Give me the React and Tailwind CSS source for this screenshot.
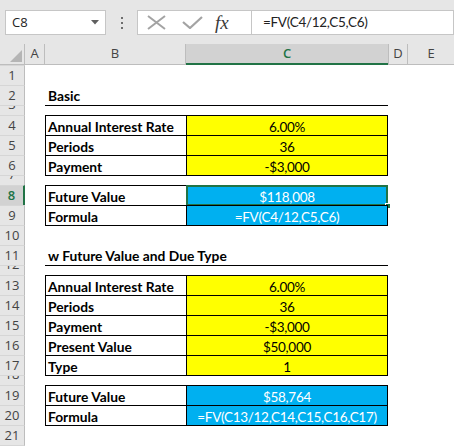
import React from "react";

const CELL_FONT = { fontFamily: "Lato, 'Liberation Sans', sans-serif" };
const UI_FONT = { fontFamily: "'Open Sans', 'Noto Sans', sans-serif" };

// Sheet rows: height, label in column B, value in column C and fill style.
// `line` draws the closing rule of the block above across columns B:C.
const ROWS = [
  { n: 1, h: 20 },
  { n: 2, h: 20, title: "Basic" },
  { n: 3, h: 10, short: true, line: true },
  { n: 4, h: 20, box: true, label: "Annual Interest Rate", value: "6.00%", fill: "yellow" },
  { n: 5, h: 20, box: true, label: "Periods", value: "36", fill: "yellow" },
  { n: 6, h: 20, box: true, label: "Payment", value: "-$3,000", fill: "yellow" },
  { n: 7, h: 10, short: true, line: true },
  { n: 8, h: 20, box: true, label: "Future Value", value: "$118,008", fill: "blue", selected: true },
  { n: 9, h: 20, box: true, label: "Formula", value: "=FV(C4/12,C5,C6)", fill: "blue" },
  { n: 10, h: 20, line: true },
  { n: 11, h: 20, title: "w Future Value and Due Type" },
  { n: 12, h: 10, short: true, line: true },
  { n: 13, h: 20, box: true, label: "Annual Interest Rate", value: "6.00%", fill: "yellow" },
  { n: 14, h: 20, box: true, label: "Periods", value: "36", fill: "yellow" },
  { n: 15, h: 20, box: true, label: "Payment", value: "-$3,000", fill: "yellow" },
  { n: 16, h: 20, box: true, label: "Present Value", value: "$50,000", fill: "yellow" },
  { n: 17, h: 20, box: true, label: "Type", value: "1", fill: "yellow" },
  { n: 18, h: 10, short: true, line: true },
  { n: 19, h: 20, box: true, label: "Future Value", value: "$58,764", fill: "blue" },
  { n: 20, h: 20, box: true, label: "Formula", value: "=FV(C13/12,C14,C15,C16,C17)", fill: "blue" },
  { n: 21, h: 20, line: true },
  { n: 22, h: 20 },
];

function RowHeader({ row }) {
  const sel = row.selected;
  return (
    <div
      className={`w-[25px] shrink-0 overflow-hidden border-t border-[#d6d6d6] border-r ${
        sel ? "bg-[#d2d2d2] border-r-[#217346] border-r-2" : "bg-[#e6e6e6] border-r-[#bdbdbd]"
      }`}
      style={{ height: row.h, ...UI_FONT }}
    >
      {row.short ? (
        <div className="text-[13px] leading-[20px] text-center text-[#444] -mt-[12px]">{row.n}</div>
      ) : (
        <div
          className={`text-[13px] leading-[19px] text-center ${
            sel ? "text-[#217346] font-semibold" : "text-[#444]"
          }`}
        >
          {row.n}
        </div>
      )}
    </div>
  );
}

function SheetRow({ row }) {
  const fillCls =
    row.fill === "yellow"
      ? "bg-[#ffff00] text-black"
      : row.fill === "blue"
      ? "bg-[#00b0f0] text-white"
      : "";
  return (
    <div className="flex" style={{ height: row.h }}>
      <RowHeader row={row} />
      <div className="w-[20px] shrink-0" />
      {row.box ? (
        <>
          <div
            className="w-[141px] shrink-0 border-l border-t border-black pl-[2px] pt-[2px] text-[13.8px] leading-[18px] font-bold text-black whitespace-nowrap"
            style={CELL_FONT}
          >
            {row.label}
          </div>
          <div className={`relative w-[202px] shrink-0 border-l border-r border-t border-black ${fillCls}`}>
            <div
              className="pt-[2px] text-[13.5px] tracking-[-0.3px] leading-[18px] text-center whitespace-nowrap"
              style={CELL_FONT}
            >
              {row.value}
            </div>
            {row.selected && (
              <>
                <div className="absolute left-[-1px] top-[-1px] right-[-1px] bottom-[-1px] border-2 border-[#217346]" />
                <div className="absolute right-[-4px] bottom-[-4px] w-[6px] h-[6px] bg-[#217346] border border-white" />
              </>
            )}
          </div>
        </>
      ) : row.title ? (
        <div
          className="w-[343px] shrink-0 pl-[3px] pt-[2px] text-[13.8px] leading-[18px] font-bold text-black whitespace-nowrap"
          style={CELL_FONT}
        >
          {row.title}
        </div>
      ) : row.line ? (
        <div className="w-[343px] shrink-0 border-t border-black" />
      ) : (
        <div className="w-[343px] shrink-0" />
      )}
      <div className="flex-1" />
    </div>
  );
}

function FormulaBar() {
  return (
    <div className="h-[44px] bg-[#e6e6e6] flex items-start pt-[10px]">
      {/* Name box */}
      <div className="ml-[5px] w-[101px] h-[25px] bg-white border border-[#c6c6c6] flex items-center justify-between pl-[6px] pr-[6px]">
        <span className="text-[13px] text-[#222]" style={UI_FONT}>C8</span>
        <svg width="8" height="5" viewBox="0 0 8 5">
          <path d="M0 0 H8 L4 4.5 Z" fill="#5f5f5f" />
        </svg>
      </div>
      {/* Grip */}
      <div className="w-[31px] h-[25px] flex flex-col items-center justify-center gap-[3px]">
        <div className="w-[2px] h-[2px] bg-[#6d6d6d]" />
        <div className="w-[2px] h-[2px] bg-[#6d6d6d]" />
        <div className="w-[2px] h-[2px] bg-[#6d6d6d]" />
      </div>
      {/* Cancel / enter / function */}
      <div className="w-[114px] h-[25px] bg-white border border-[#c6c6c6] border-r-0 flex items-center">
        <svg className="ml-[9px]" width="19" height="15" viewBox="0 0 19 15">
          <path d="M1 1 L18 14 M18 1 L1 14" stroke="#a3a3a3" strokeWidth="2" fill="none" />
        </svg>
        <svg className="ml-[16px]" width="21" height="13" viewBox="0 0 21 13">
          <path d="M1 6 L8 12 L20 1" stroke="#a3a3a3" strokeWidth="2.2" fill="none" />
        </svg>
        <span
          className="ml-[12px] text-[19px] italic text-[#3a3a3a] leading-none"
          style={{ fontFamily: "'Liberation Serif', serif" }}
        >
          fx
        </span>
      </div>
      {/* Formula input */}
      <div className="flex-1 h-[25px] bg-white border border-[#c6c6c6] flex items-center pl-[11px]">
        <span className="text-[13.5px] tracking-[-0.3px] text-[#222]" style={CELL_FONT}>
          =FV(C4/12,C5,C6)
        </span>
      </div>
    </div>
  );
}

function ColumnHeaders() {
  return (
    <div className="h-[21px] flex bg-[#e6e6e6] text-[13px] text-[#444]" style={UI_FONT}>
      <div className="w-[25px] shrink-0 border-r border-b border-[#bdbdbd] relative">
        <svg className="absolute left-[10px] top-[6px]" width="12" height="12" viewBox="0 0 12 12">
          <path d="M12 0 V12 H0 Z" fill="#b5b5b5" />
        </svg>
      </div>
      <div className="w-[20px] shrink-0 border-r border-b border-[#bdbdbd] flex items-center justify-center">A</div>
      <div className="w-[141px] shrink-0 border-r border-b border-[#bdbdbd] flex items-center justify-center">B</div>
      <div className="w-[202px] shrink-0 bg-[#d2d2d2] border-b-2 border-[#217346] flex items-center justify-center text-[#217346] font-semibold">
        C
      </div>
      <div className="w-[20px] shrink-0 border-r border-l border-b border-[#bdbdbd] flex items-center justify-center">D</div>
      <div className="flex-1 border-b border-[#bdbdbd] flex items-center justify-center">E</div>
    </div>
  );
}

export default function App() {
  return (
    <div className="w-[454px] h-[446px] overflow-hidden bg-white">
      <FormulaBar />
      <ColumnHeaders />
      <div>
        {ROWS.map((r) => (
          <SheetRow key={r.n} row={r} />
        ))}
      </div>
    </div>
  );
}
